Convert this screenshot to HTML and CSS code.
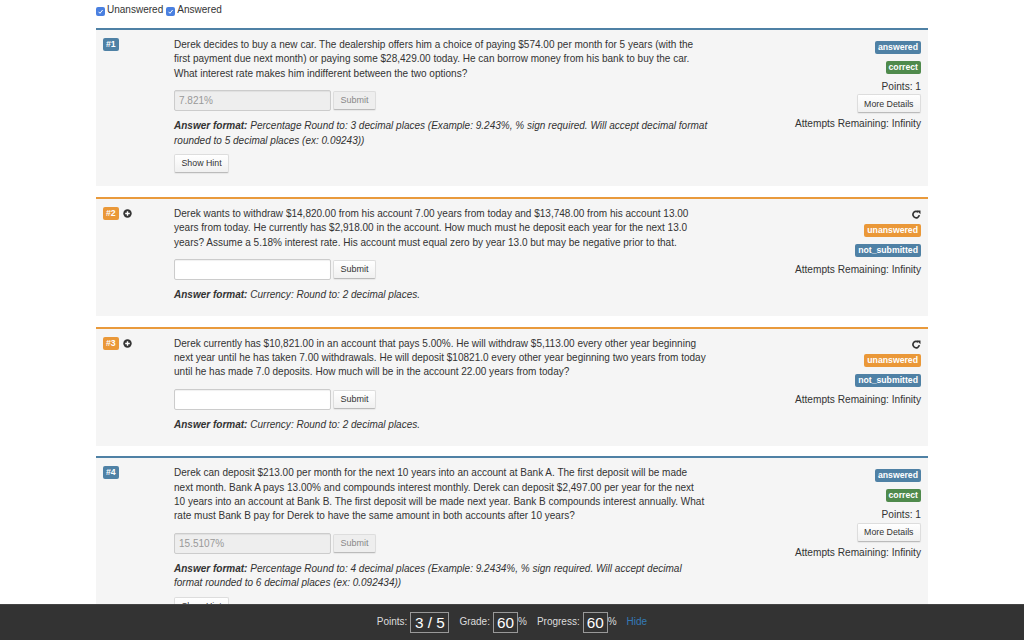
FILE: index.html
```html
<!DOCTYPE html>
<html lang="en">
<head>
<meta charset="utf-8">
<title>Problem set</title>
<link rel="stylesheet" href="styles.css">
</head>
<body>
<main class="page">
  <div class="filters">
    <label class="filter"><span class="check"><svg viewBox="0 0 9 9" width="9" height="9"><path d="M2.6 4.8 4 6.3 6.6 3" fill="none" stroke="#fff" stroke-width="1"/></svg></span>Unanswered</label>
    <label class="filter"><span class="check"><svg viewBox="0 0 9 9" width="9" height="9"><path d="M2.6 4.8 4 6.3 6.6 3" fill="none" stroke="#fff" stroke-width="1"/></svg></span>Answered</label>
  </div>

  <section class="card card-done">
    <div class="num"><span class="tag tag-blue">#1</span></div>
    <div class="body">
      <p class="question">Derek decides to buy a new car. The dealership offers him a choice of paying $574.00 per month for 5 years (with the first payment due next month) or paying some $28,429.00 today. He can borrow money from his bank to buy the car. What interest rate makes him indifferent between the two options?</p>
      <div class="answer"><input class="field" value="7.821%" disabled><button class="btn btn-off">Submit</button></div>
      <p class="format"><b>Answer format:</b> Percentage Round to: 3 decimal places (Example: 9.243%, % sign required. Will accept decimal format rounded to 5 decimal places (ex: 0.09243))</p>
      <button class="btn">Show Hint</button>
    </div>
    <div class="side">
      <span class="tag tag-blue">answered</span>
      <span class="tag tag-green">correct</span>
      <div class="line">Points: 1</div>
      <button class="btn">More Details</button>
      <div class="line">Attempts Remaining: Infinity</div>
    </div>
  </section>

  <section class="card card-open">
    <div class="num"><span class="tag tag-orange">#2</span><svg class="plus" viewBox="0 0 9 9" width="9" height="9"><circle cx="4.5" cy="4.5" r="4.2" fill="#333"/><path d="M2.2 4.5h4.6M4.5 2.2v4.6" stroke="#fff" stroke-width="1.4"/></svg></div>
    <div class="body">
      <p class="question">Derek wants to withdraw $14,820.00 from his account 7.00 years from today and $13,748.00 from his account 13.00 years from today. He currently has $2,918.00 in the account. How much must he deposit each year for the next 13.0 years? Assume a 5.18% interest rate. His account must equal zero by year 13.0 but may be negative prior to that.</p>
      <div class="answer"><input class="field"><button class="btn">Submit</button></div>
      <p class="format"><b>Answer format:</b> Currency: Round to: 2 decimal places.</p>
    </div>
    <div class="side">
      <svg class="redo" viewBox="0 0 9 9" width="9" height="9"><path d="M7.3 5.2A3.2 3.2 0 1 1 6.3 2.2" fill="none" stroke="#333" stroke-width="1.7"/><path d="M4.8 .6h3.7v3.7z" fill="#333"/></svg>
      <span class="tag tag-orange">unanswered</span>
      <span class="tag tag-blue">not_submitted</span>
      <div class="line">Attempts Remaining: Infinity</div>
    </div>
  </section>

  <section class="card card-open">
    <div class="num"><span class="tag tag-orange">#3</span><svg class="plus" viewBox="0 0 9 9" width="9" height="9"><circle cx="4.5" cy="4.5" r="4.2" fill="#333"/><path d="M2.2 4.5h4.6M4.5 2.2v4.6" stroke="#fff" stroke-width="1.4"/></svg></div>
    <div class="body">
      <p class="question">Derek currently has $10,821.00 in an account that pays 5.00%. He will withdraw $5,113.00 every other year beginning next year until he has taken 7.00 withdrawals. He will deposit $10821.0 every other year beginning two years from today until he has made 7.0 deposits. How much will be in the account 22.00 years from today?</p>
      <div class="answer"><input class="field"><button class="btn">Submit</button></div>
      <p class="format"><b>Answer format:</b> Currency: Round to: 2 decimal places.</p>
    </div>
    <div class="side">
      <svg class="redo" viewBox="0 0 9 9" width="9" height="9"><path d="M7.3 5.2A3.2 3.2 0 1 1 6.3 2.2" fill="none" stroke="#333" stroke-width="1.7"/><path d="M4.8 .6h3.7v3.7z" fill="#333"/></svg>
      <span class="tag tag-orange">unanswered</span>
      <span class="tag tag-blue">not_submitted</span>
      <div class="line">Attempts Remaining: Infinity</div>
    </div>
  </section>

  <section class="card card-done">
    <div class="num"><span class="tag tag-blue">#4</span></div>
    <div class="body">
      <p class="question">Derek can deposit $213.00 per month for the next 10 years into an account at Bank A. The first deposit will be made next month. Bank A pays 13.00% and compounds interest monthly. Derek can deposit $2,497.00 per year for the next 10 years into an account at Bank B. The first deposit will be made next year. Bank B compounds interest annually. What rate must Bank B pay for Derek to have the same amount in both accounts after 10 years?</p>
      <div class="answer"><input class="field" value="15.5107%" disabled><button class="btn btn-off">Submit</button></div>
      <p class="format"><b>Answer format:</b> Percentage Round to: 4 decimal places (Example: 9.2434%, % sign required. Will accept decimal format rounded to 6 decimal places (ex: 0.092434))</p>
      <button class="btn">Show Hint</button>
    </div>
    <div class="side">
      <span class="tag tag-blue">answered</span>
      <span class="tag tag-green">correct</span>
      <div class="line">Points: 1</div>
      <button class="btn">More Details</button>
      <div class="line">Attempts Remaining: Infinity</div>
    </div>
  </section>
</main>

<footer class="bar">
  <span>Points:</span><span class="box box-wide">3 / 5</span>
  <span class="gap">Grade:</span><span class="box">60</span><span>%</span>
  <span class="gap">Progress:</span><span class="box">60</span><span>%</span>
  <a class="hide" href="#">Hide</a>
</footer>
</body>
</html>
```

FILE: styles.css
```css
html, body {
  margin: 0;
  height: 640px;
  overflow: hidden;
  background: #fff;
}
body {
  font-family: "Liberation Sans", Arial, sans-serif;
  font-size: 10.03px;
  line-height: 14.3px;
  color: #333;
}
.page {
  padding: 3px 96px 0;
}
.filters {
  display: flex;
  gap: 3px;
  height: 25px;
}
.filter {
  display: flex;
  align-items: flex-start;
  gap: 2px;
}
.check {
  width: 9px;
  height: 9px;
  margin-top: 4px;
  border-radius: 2px;
  background: #4a80e0;
  display: flex;
}
.card {
  display: grid;
  grid-template-columns: 71px 533.5px 1fr;
  background: #f5f5f5;
  padding: 8px 7px 13.5px 7px;
  margin-bottom: 10.5px;
  border-top: 2px solid #4f81a5;
}
.card-open {
  border-top-color: #e99a3c;
}
.num {
  display: flex;
  align-items: flex-start;
  gap: 4px;
}
.plus {
  margin-top: 2px;
}
.tag {
  display: inline-block;
  height: 13px;
  padding: 0 3px;
  border-radius: 2px;
  font-size: 8.7px;
  font-weight: 700;
  line-height: 13px;
  color: #fff;
  white-space: nowrap;
}
.tag-blue { background: #4f81a5; }
.tag-green { background: #4f8a4c; }
.tag-orange { background: #ea9838; }
.body {
  min-width: 0;
}
.question {
  margin: 0;
}
.answer {
  display: flex;
  align-items: center;
  gap: 2px;
  margin-top: 9px;
}
.field {
  box-sizing: border-box;
  width: 157px;
  height: 21px;
  padding: 0 4px;
  border: 1px solid #ccc;
  border-radius: 2px;
  background: #fff;
  font: inherit;
  color: #999;
  box-shadow: inset 0 1px 1px rgba(0,0,0,.06);
}
.field:disabled {
  background: #eee;
}
.btn {
  box-sizing: border-box;
  height: 19px;
  padding: 0 6.5px;
  border: 1px solid #ddd;
  border-bottom-color: #bbb;
  border-radius: 2px;
  background: linear-gradient(#fff, #f0f0f0);
  font: inherit;
  font-size: 8.8px;
  color: #333;
  box-shadow: 0 1px 1px rgba(0,0,0,.06);
}
.answer .btn {
  width: 43px;
  padding: 0;
  font-size: 9px;
}
.btn-off {
  background: #eee;
  color: #888;
}
.format {
  margin: 8.5px 0 6px;
  font-style: italic;
}
.format:last-child {
  margin-bottom: 0;
}
.side {
  display: flex;
  flex-direction: column;
  align-items: flex-end;
  padding-top: 3px;
  font-size: 10.14px;
}
.side .tag {
  margin-bottom: 7px;
}
.side .line {
  margin-top: -1px;
}
.side .btn {
  margin: 0 0 5px;
}
.redo {
  margin: 0 0 5px;
}
.bar {
  position: fixed;
  left: 0;
  right: 0;
  bottom: 0;
  height: 36px;
  box-sizing: border-box;
  padding-bottom: 1px;
  border-top: 1px solid #444;
  display: flex;
  align-items: center;
  justify-content: center;
  background: #333;
  color: #ddd;
  font-size: 10px;
}
.box {
  box-sizing: border-box;
  height: 21px;
  margin-left: 3px;
  padding: 0 3px;
  border: 1px solid #999;
  font-size: 15.3px;
  line-height: 19px;
  color: #fff;
  text-align: center;
}
.box-wide {
  width: 39px;
  padding: 0;
}
.gap {
  margin-left: 10px;
}
.hide {
  margin-left: 10px;
  color: #337ab7;
  text-decoration: none;
}
```
